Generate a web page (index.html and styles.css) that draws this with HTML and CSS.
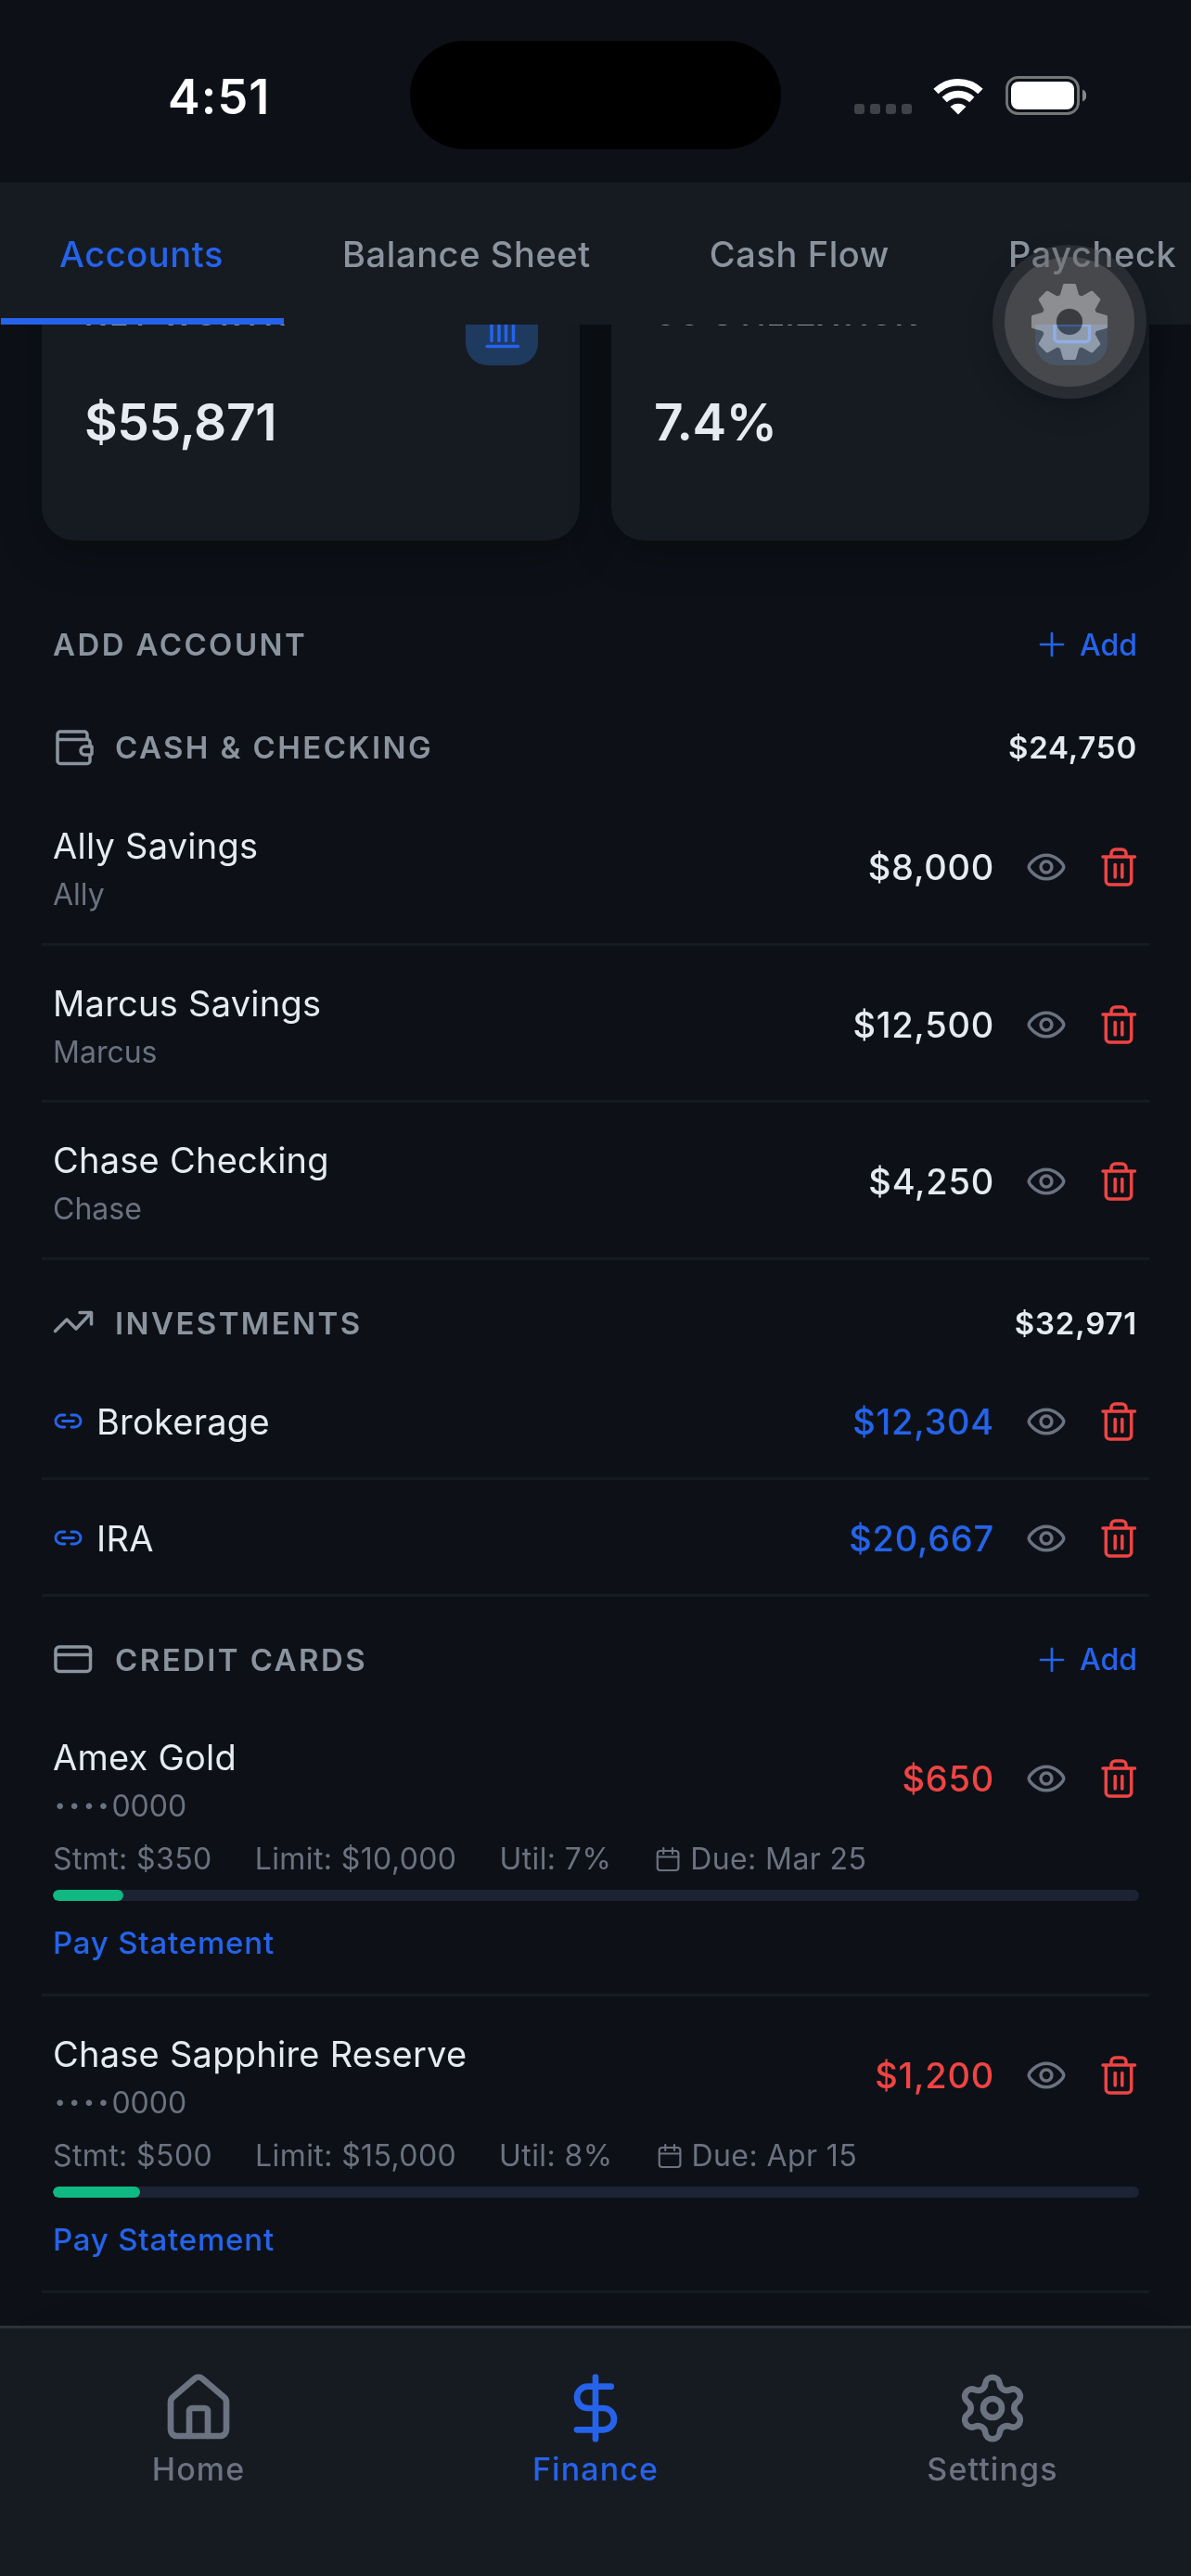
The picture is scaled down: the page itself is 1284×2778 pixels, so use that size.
FILE: index.html
```
<!DOCTYPE html>
<html lang="en">
<head>
	<meta charset="utf-8">
	<title>Finance</title>
	<link rel="stylesheet" href="styles.css">
</head>
<body>
	<!-- Icon sprite -->
	<svg class="sprite">
		<symbol id="wallet" viewBox="0 0 47 47"><path d="M39 14V9a3 3 0 0 0-3-3H10a3 3 0 0 0-3 3v28.500a3 3 0 0 0 3 3h29a3 3 0 0 0 3-3V31M7 12.500a2 2 0 0 0 2 2h30a3 3 0 0 1 3 3V22M44 22h-7.500a4.500 4.500 0 0 0 0 9H42a2 2 0 0 0 2-2z"/></symbol>
		<symbol id="trend" viewBox="0 0 47 47"><path d="M4.500 32.500L17 20l10 10L43 13M31 12.500h12.500V25"/></symbol>
		<symbol id="card" viewBox="0 0 47 47"><rect x="5" y="10" width="37.500" height="26.500" rx="4"/><path d="M5 18.500h37.500"/></symbol>
		<symbol id="bank" viewBox="0 0 47 47"><path d="M7 15L23.500 5 40 15zM12 17v18.500M20 17v18.500M27.500 17v18.500M35.500 17v18.500M7 41.500h33.500"/></symbol>
		<symbol id="eye" viewBox="0 0 44 44"><path d="M3.200 22C3.200 19.500 11 9.200 22 9.200S40.800 19.500 40.800 22 33 34.800 22 34.800 3.200 24.500 3.200 22z"/><circle cx="22" cy="22" r="5.900"/></symbol>
		<symbol id="trash" viewBox="0 0 44 44"><path d="M5 11h34.500M14 11V7.500A4.500 4.500 0 0 1 18.500 3h7A4.500 4.500 0 0 1 30 7.500V11M8.300 11v26a4 4 0 0 0 4 4h19.400a4 4 0 0 0 4-4V11M18.200 19.500V33M25.800 19.500V33"/></symbol>
		<symbol id="plus" viewBox="0 0 34 34"><path d="M5 17h24M17 5v24"/></symbol>
		<symbol id="link" viewBox="0 0 33 33"><path d="M12.800 10H9.500a6.500 6.500 0 0 0 0 13h3.300M20 10h3.500a6.500 6.500 0 0 1 0 13H20M10.500 16.500h12"/></symbol>
		<symbol id="calendar" viewBox="0 0 30 30"><rect x="3.800" y="6" width="22.600" height="21" rx="3"/><path d="M3.800 12.500h22.600M10.300 3v6M20 3v6"/></symbol>
		<symbol id="home" viewBox="0 0 24 24"><path d="M15 21v-8a1 1 0 0 0-1-1h-4a1 1 0 0 0-1 1v8"/><path d="M3 10a2 2 0 0 1 .709-1.528l7-6a2 2 0 0 1 2.582 0l7 6A2 2 0 0 1 21 10v9a2 2 0 0 1-2 2H5a2 2 0 0 1-2-2z"/></symbol>
		<symbol id="dollar" viewBox="0 0 24 24"><path d="M12 2v20M17 5H9.500a3.500 3.500 0 0 0 0 7h5a3.500 3.500 0 0 1 0 7H6"/></symbol>
		<symbol id="settings" viewBox="0 0 24 24"><path d="M9.671 4.136a2.340 2.340 0 0 1 4.659 0 2.340 2.340 0 0 0 3.319 1.915 2.340 2.340 0 0 1 2.330 4.033 2.340 2.340 0 0 0 0 3.831 2.340 2.340 0 0 1-2.330 4.033 2.340 2.340 0 0 0-3.319 1.915 2.340 2.340 0 0 1-4.659 0 2.340 2.340 0 0 0-3.320-1.915 2.340 2.340 0 0 1-2.330-4.033 2.340 2.340 0 0 0 0-3.831A2.340 2.340 0 0 1 6.350 6.051a2.340 2.340 0 0 0 3.319-1.915"/><circle cx="12" cy="12" r="3"/></symbol>
	</svg>

	<header class="status-bar">
		<span class="time">4:51</span>
		<div class="island"></div>
		<div class="status-icons">
			<div class="signal"><i></i><i></i><i></i><i></i></div>
			<svg class="wifi" viewBox="0 0 54 40">
				<path class="arc" d="M3 14.500A34.500 34.500 0 0 1 51 14.500M12.200 23.500A21.500 21.500 0 0 1 41.800 23.500"/>
				<path class="dot" d="M27 39.500L18.500 31A12.500 12.500 0 0 1 35.500 31z"/>
			</svg>
			<svg class="battery" viewBox="0 0 87 42">
				<rect class="shell" x="1.500" y="1.500" width="77" height="39" rx="12"/>
				<rect class="level" x="6" y="6" width="68" height="30" rx="8"/>
				<path class="nub" d="M83 14.500a7 7 0 0 1 0 13z"/>
			</svg>
		</div>
	</header>

	<nav class="tabs">
		<a class="tab active">Accounts</a>
		<a class="tab">Balance Sheet</a>
		<a class="tab">Cash Flow</a>
		<a class="tab">Paycheck</a>
	</nav>

	<main class="content">
		<div class="summary">
			<div class="card">
				<div class="card-head">
					<span class="card-label">NET WORTH</span>
					<span class="card-icon"><svg class="icon"><use href="#bank"/></svg></span>
				</div>
				<div class="card-value">$55,871</div>
			</div>
			<div class="card">
				<div class="card-head">
					<span class="card-label util">CC UTILIZATION</span>
					<span class="card-icon"><svg class="icon"><use href="#card"/></svg></span>
				</div>
				<div class="card-value">7.4%</div>
			</div>
		</div>

		<div class="section-head add-account">
			<h2>ADD ACCOUNT</h2>
			<a class="add"><svg><use href="#plus"/></svg>Add</a>
		</div>

		<section class="cash">
			<div class="section-head">
				<svg class="icon"><use href="#wallet"/></svg>
				<h2>CASH &amp; CHECKING</h2>
				<span class="total">$24,750</span>
			</div>
			<div class="account">
				<div class="row">
					<div class="info"><div class="name">Ally Savings</div><div class="sub">Ally</div></div>
					<span class="amount">$8,000</span>
					<svg class="eye"><use href="#eye"/></svg>
					<svg class="trash"><use href="#trash"/></svg>
				</div>
			</div>
			<div class="account">
				<div class="row">
					<div class="info"><div class="name">Marcus Savings</div><div class="sub">Marcus</div></div>
					<span class="amount">$12,500</span>
					<svg class="eye"><use href="#eye"/></svg>
					<svg class="trash"><use href="#trash"/></svg>
				</div>
			</div>
			<div class="account">
				<div class="row">
					<div class="info"><div class="name">Chase Checking</div><div class="sub">Chase</div></div>
					<span class="amount">$4,250</span>
					<svg class="eye"><use href="#eye"/></svg>
					<svg class="trash"><use href="#trash"/></svg>
				</div>
			</div>
		</section>

		<section>
			<div class="section-head">
				<svg class="icon"><use href="#trend"/></svg>
				<h2>INVESTMENTS</h2>
				<span class="total">$32,971</span>
			</div>
			<div class="account linked">
				<div class="row">
					<svg class="link"><use href="#link"/></svg>
					<div class="info"><div class="name">Brokerage</div></div>
					<span class="amount blue">$12,304</span>
					<svg class="eye"><use href="#eye"/></svg>
					<svg class="trash"><use href="#trash"/></svg>
				</div>
			</div>
			<div class="account linked">
				<div class="row">
					<svg class="link"><use href="#link"/></svg>
					<div class="info"><div class="name">IRA</div></div>
					<span class="amount blue">$20,667</span>
					<svg class="eye"><use href="#eye"/></svg>
					<svg class="trash"><use href="#trash"/></svg>
				</div>
			</div>
		</section>

		<section>
			<div class="section-head">
				<svg class="icon"><use href="#card"/></svg>
				<h2>CREDIT CARDS</h2>
				<a class="add"><svg><use href="#plus"/></svg>Add</a>
			</div>
			<div class="account credit">
				<div class="row">
					<div class="info"><div class="name">Amex Gold</div><div class="sub"><span class="dots">····</span>0000</div></div>
					<span class="amount red">$650</span>
					<svg class="eye"><use href="#eye"/></svg>
					<svg class="trash"><use href="#trash"/></svg>
				</div>
				<div class="stats">
					<span>Stmt: $350</span>
					<span>Limit: $10,000</span>
					<span>Util: 7%</span>
					<span class="due"><svg><use href="#calendar"/></svg>Due: Mar 25</span>
				</div>
				<div class="bar"><div class="bar-fill" style="width: 6.5%"></div></div>
				<a class="pay">Pay Statement</a>
			</div>
			<div class="account credit">
				<div class="row">
					<div class="info"><div class="name">Chase Sapphire Reserve</div><div class="sub"><span class="dots">····</span>0000</div></div>
					<span class="amount red">$1,200</span>
					<svg class="eye"><use href="#eye"/></svg>
					<svg class="trash"><use href="#trash"/></svg>
				</div>
				<div class="stats">
					<span>Stmt: $500</span>
					<span>Limit: $15,000</span>
					<span>Util: 8%</span>
					<span class="due"><svg><use href="#calendar"/></svg>Due: Apr 15</span>
				</div>
				<div class="bar"><div class="bar-fill" style="width: 8%"></div></div>
				<a class="pay">Pay Statement</a>
			</div>
		</section>

		<div class="card more"></div>
	</main>

	<nav class="bottom-nav">
		<a class="nav-item"><svg><use href="#home"/></svg>Home</a>
		<a class="nav-item active"><svg><use href="#dollar"/></svg>Finance</a>
		<a class="nav-item"><svg><use href="#settings"/></svg>Settings</a>
	</nav>

	<!-- Floating tools button -->
	<div class="fab">
		<div class="fab-inner">
			<svg viewBox="-42 -42 84 84">
				<defs>
					<path id="tooth" d="M-5.500-39.500h11l4 14h-19z"/>
					<mask id="hole"><rect x="-42" y="-42" width="84" height="84" fill="#fff" stroke="none"/><circle r="14" fill="#000" stroke="none"/></mask>
				</defs>
				<g mask="url(#hole)">
					<circle r="29"/>
					<use href="#tooth"/>
					<use href="#tooth" transform="rotate(45)"/>
					<use href="#tooth" transform="rotate(90)"/>
					<use href="#tooth" transform="rotate(135)"/>
					<use href="#tooth" transform="rotate(180)"/>
					<use href="#tooth" transform="rotate(225)"/>
					<use href="#tooth" transform="rotate(270)"/>
					<use href="#tooth" transform="rotate(315)"/>
				</g>
			</svg>
		</div>
	</div>
</body>
</html>
```
FILE: styles.css
```
* {
	box-sizing: border-box;
}
body {
	margin: 0;
	height: 2778px;
	display: flex;
	flex-direction: column;
	overflow: hidden;
	background-color: #0d1117;
	color: #e6eaf2;
	font-family: Inter, sans-serif;
}
svg {
	display: block;
	flex-shrink: 0;
	fill: none;
	stroke: currentColor;
	stroke-linecap: round;
	stroke-linejoin: round;
}
.sprite {
	position: absolute;
	width: 0;
	height: 0;
}

/* Status bar */
.status-bar {
	flex: 0 0 197px;
	display: grid;
	grid-template-columns: 442px 400px 442px;
	align-items: center;
	padding-top: 8px;
}
.time {
	padding: 3px 0 0 181px;
	font-size: 52px;
	font-weight: 600;
	letter-spacing: 1.1px;
	color: #ffffff;
}
.island {
	height: 117px;
	border-radius: 59px;
	background-color: #000000;
}
.status-icons {
	display: flex;
	align-items: flex-end;
	justify-content: flex-end;
	padding: 1px 113px 0 0;
}
.signal {
	display: flex;
	gap: 6px;
	margin: 0 23px 1px 0;
}
.signal i {
	width: 11px;
	height: 11px;
	border-radius: 3px;
	background-color: #3f4246;
}
.wifi {
	width: 54px;
	height: 40px;
	margin-right: 24px;
	color: #ffffff;
}
.wifi .arc {
	stroke-width: 7.6;
	stroke-linecap: butt;
}
.wifi .dot {
	fill: #ffffff;
	stroke: none;
}
.battery {
	width: 87px;
	height: 42px;
}
.battery .shell {
	stroke: #74767a;
	stroke-width: 2.8;
}
.battery .level {
	fill: #ffffff;
	stroke: none;
}
.battery .nub {
	fill: #85878a;
	stroke: none;
}

/* Top tabs */
.tabs {
	flex: 0 0 153px;
	display: flex;
	background-color: #161b22;
}
.tab {
	position: relative;
	padding: 2px 64px 0;
	line-height: 151px;
	font-size: 38px;
	font-weight: 500;
	letter-spacing: 0.6px;
	white-space: nowrap;
	color: #8b949e;
}
.tab.active {
	color: #2563eb;
}
.tab.active::after {
	content: "";
	position: absolute;
	left: 1px;
	right: -1px;
	bottom: 0;
	height: 7px;
	background-color: #2563eb;
}

/* Content */
.content {
	flex: 1 1 0;
	min-height: 0;
	overflow: hidden;
	padding: 0 45px;
}
.summary {
	display: grid;
	grid-template-columns: 1fr 1fr;
	gap: 34px;
	margin-top: -80px;
}
.card {
	height: 313px;
	padding: 46px 45px 0 46px;
	border-radius: 36px;
	background-color: #161b22;
	box-shadow: 0 12px 44px rgba(0, 0, 0, 0.35);
}
.card-head {
	display: flex;
	justify-content: space-between;
}
.card-label {
	font-size: 33px;
	font-weight: 600;
	line-height: 47px;
	letter-spacing: 2.1px;
	color: #8b949e;
}
.card-label.util {
	letter-spacing: 1.6px;
}
.card-icon {
	display: flex;
	align-items: center;
	justify-content: center;
	width: 78px;
	height: 78px;
	border-radius: 24px;
	background-color: #1e3a5f;
	color: #2563eb;
}
.card-value {
	margin-top: 28px;
	font-size: 55px;
	font-weight: 600;
	line-height: 66px;
	letter-spacing: -0.4px;
}
.icon {
	width: 47px;
	height: 47px;
	stroke-width: 3.5;
}

.section-head {
	display: flex;
	align-items: center;
	height: 48px;
	margin: 44px 0 19px;
	padding: 0 13px 0 12px;
}
.section-head.add-account {
	margin: 88px 0 0;
}
.cash .section-head {
	margin: 63px 0 20px;
}
.section-head .icon {
	margin: 0 22px 0 -2px;
	color: #8b949e;
}
.section-head h2 {
	flex: 1;
	margin: 0;
	font-size: 33px;
	font-weight: 600;
	line-height: 48px;
	letter-spacing: 2.4px;
	color: #8b949e;
}
.total {
	font-size: 33px;
	font-weight: 600;
	letter-spacing: 0.8px;
}
.add {
	display: flex;
	align-items: center;
	gap: 13px;
	font-size: 32px;
	font-weight: 500;
	color: #2563eb;
}
.add svg {
	width: 34px;
	height: 34px;
	stroke-width: 2.7;
}

.account {
	padding: 32px 11px 28px 12px;
	border-bottom: 3px solid #161b22;
}
.account.linked {
	padding: 33px 11px 30px 12px;
}
.account.credit {
	padding-bottom: 33px;
}
.row {
	display: flex;
	align-items: center;
}
.info {
	flex: 1;
}
.name {
	font-size: 38px;
	line-height: 60px;
	letter-spacing: 0.25px;
}
.sub {
	font-size: 32px;
	line-height: 46.5px;
	color: #6b7280;
}
.dots {
	margin-left: 1px;
	font-size: 42px;
	font-weight: 600;
	line-height: 0;
	letter-spacing: 2.2px;
	vertical-align: -3px;
}
.amount {
	font-size: 38px;
	font-weight: 500;
	line-height: 46px;
	letter-spacing: 0.75px;
}
.amount.blue {
	color: #2563eb;
}
.amount.red {
	color: #ef4444;
}
.eye, .trash {
	width: 44px;
	height: 44px;
	margin-left: 34px;
	stroke-width: 3.5;
}
.eye {
	color: #6b7280;
}
.trash {
	color: #ef4444;
}
.link {
	width: 33px;
	height: 33px;
	margin-right: 14px;
	stroke-width: 2.9;
	color: #2563eb;
}

.stats {
	display: flex;
	gap: 46px;
	margin-top: 12px;
	font-size: 32px;
	line-height: 44px;
	letter-spacing: 0.4px;
	color: #6b7280;
}
.due {
	display: flex;
	align-items: center;
	gap: 9px;
}
.due svg {
	width: 30px;
	height: 30px;
	stroke-width: 2.2;
}
.bar {
	height: 12px;
	margin-top: 10.5px;
	border-radius: 6px;
	background-color: #1c2333;
	overflow: hidden;
}
.bar-fill {
	height: 100%;
	border-radius: 6px;
	background-color: #10b981;
}
.pay {
	display: block;
	margin-top: 23px;
	font-size: 33px;
	font-weight: 500;
	line-height: 44px;
	letter-spacing: 0.8px;
	color: #2563eb;
}
.card.more {
	margin-top: 42px;
}

/* Bottom navigation */
.bottom-nav {
	flex: 0 0 270px;
	display: grid;
	grid-template-columns: repeat(3, 1fr);
	border-top: 3px solid #2b3239;
	background-color: #161b22;
}
.nav-item {
	display: flex;
	flex-direction: column;
	align-items: center;
	gap: 4px;
	padding-top: 46px;
	font-size: 34px;
	font-weight: 500;
	line-height: 44px;
	letter-spacing: 1.1px;
	color: #6b7280;
}
.nav-item.active {
	color: #2563eb;
}
.nav-item svg {
	width: 80px;
	height: 80px;
	stroke-width: 2;
}

/* Floating button */
.fab {
	position: absolute;
	top: 264px;
	left: 1070px;
	width: 166px;
	height: 166px;
	padding: 13px;
	border-radius: 50%;
	background-color: rgba(76, 76, 76, 0.35);
	box-shadow: 0 12px 30px rgba(0, 0, 0, 0.2);
}
.fab-inner {
	display: flex;
	align-items: center;
	justify-content: center;
	width: 140px;
	height: 140px;
	border-radius: 50%;
	background: radial-gradient(circle, rgba(90, 90, 90, 0.35) 14px, rgba(124, 124, 124, 0.35) 15px);
}
/* the gear only brightens what lies under it */
.fab svg {
	width: 84px;
	height: 84px;
	fill: #464646;
	stroke: #464646;
	stroke-width: 3;
	mix-blend-mode: plus-lighter;
}
```
